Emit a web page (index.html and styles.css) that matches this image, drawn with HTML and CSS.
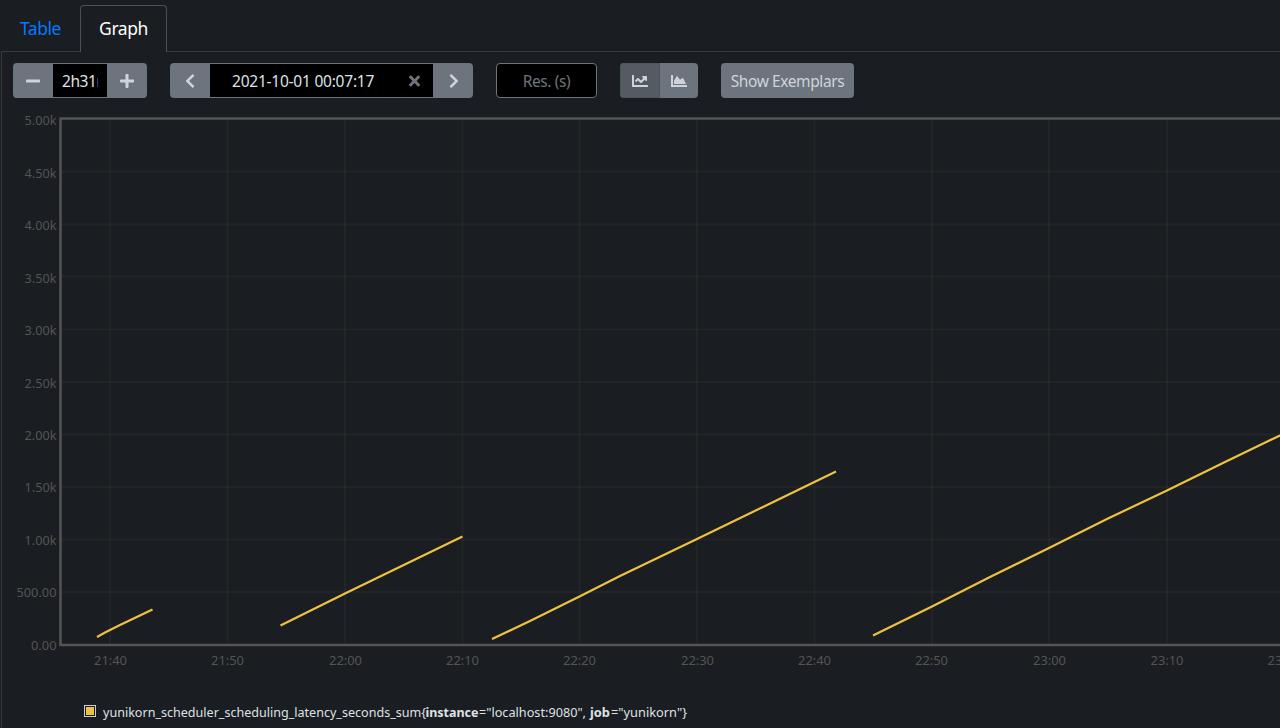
FILE: index.html
```
<!DOCTYPE html>
<html lang="en">
<head>
<meta charset="utf-8">
<title>Graph</title>
<link rel="stylesheet" href="styles.css">
</head>
<body>
<nav class="tabs">
  <a class="tab">Table</a>
  <a class="tab active">Graph</a>
</nav>
<main class="panel">
  <div class="controls">
    <div class="group range">
      <button class="btn"><svg class="icon" viewBox="0 0 448 512"><path d="M416 208H32c-17.67 0-32 14.33-32 32v32c0 17.67 14.33 32 32 32h384c17.67 0 32-14.33 32-32v-32c0-17.67-14.33-32-32-32z"/></svg></button>
      <div class="field duration"><span>2h31m</span></div>
      <button class="btn"><svg class="icon" viewBox="0 0 448 512"><path d="M416 208H272V64c0-17.67-14.33-32-32-32h-32c-17.67 0-32 14.33-32 32v144H32c-17.67 0-32 14.33-32 32v32c0 17.67 14.33 32 32 32h144v144c0 17.67 14.33 32 32 32h32c17.67 0 32-14.33 32-32V304h144c17.67 0 32-14.33 32-32v-32c0-17.67-14.33-32-32-32z"/></svg></button>
    </div>
    <div class="group time">
      <button class="btn prev"><svg class="icon" viewBox="0 0 320 512"><path d="M34.52 239.03L228.87 44.69c9.37-9.37 24.57-9.37 33.94 0l22.67 22.67c9.36 9.36 9.37 24.52.04 33.9L131.49 256l154.02 154.75c9.34 9.38 9.32 24.54-.04 33.9l-22.67 22.67c-9.37 9.37-24.57 9.37-33.94 0L34.52 272.97c-9.37-9.37-9.37-24.57 0-33.94z"/></svg></button>
      <div class="field datetime"><span>2021-10-01 00:07:17</span><svg class="icon clear" viewBox="0 0 352 512"><path d="M242.72 256l100.07-100.07c12.28-12.28 12.28-32.19 0-44.48l-22.24-22.24c-12.28-12.28-32.19-12.28-44.48 0L176 189.28 75.93 89.21c-12.28-12.28-32.19-12.28-44.48 0L9.21 111.45c-12.28 12.28-12.28 32.19 0 44.48L109.28 256 9.21 356.07c-12.28 12.28-12.28 32.19 0 44.48l22.24 22.24c12.28 12.28 32.2 12.28 44.48 0L176 322.72l100.07 100.07c12.28 12.28 32.2 12.28 44.48 0l22.24-22.24c12.28-12.28 12.28-32.19 0-44.48L242.72 256z"/></svg></div>
      <button class="btn next"><svg class="icon" viewBox="0 0 320 512"><path d="M285.476 272.971L91.132 467.314c-9.373 9.373-24.569 9.373-33.941 0l-22.667-22.667c-9.357-9.357-9.375-24.522-.04-33.901L188.505 256 34.484 101.255c-9.335-9.379-9.317-24.544.04-33.901l22.667-22.667c9.373-9.373 24.569-9.373 33.941 0L285.475 239.03c9.373 9.372 9.373 24.568.001 33.941z"/></svg></button>
    </div>
    <div class="resolution">Res. (s)</div>
    <div class="group kind">
      <button class="btn pressed"><svg class="icon" viewBox="0 0 512 512"><path d="M496 384H64V80c0-8.84-7.16-16-16-16H16C7.16 64 0 71.16 0 80v336c0 17.67 14.33 32 32 32h464c8.84 0 16-7.16 16-16v-32c0-8.84-7.16-16-16-16zM464 96H345.94c-21.38 0-32.09 25.85-16.97 40.97l32.4 32.4L288 242.75l-73.37-73.37c-12.5-12.5-32.76-12.5-45.25 0l-68.69 68.69c-6.25 6.25-6.25 16.38 0 22.63l22.62 22.62c6.25 6.25 16.38 6.25 22.63 0L192 237.25l73.37 73.37c12.5 12.5 32.76 12.5 45.25 0l96-96 32.4 32.4c15.12 15.12 40.97 4.41 40.97-16.97V112c.01-8.84-7.15-16-15.99-16z"/></svg></button>
      <button class="btn"><svg class="icon" viewBox="0 0 512 512"><path d="M500 384c6.6 0 12 5.4 12 12v40c0 6.600-5.400 12-12 12H12c-6.600 0-12-5.400-12-12V76c0-6.600 5.400-12 12-12h40c6.600 0 12 5.400 12 12v308h436zM372.700 159.500L288 216l-85.300-113.700c-5.100-6.800-15.500-6.300-19.900 1L96 248v104h384l-89.900-187.800c-3.200-6.500-11.400-8.700-17.400-4.700z"/></svg></button>
    </div>
    <button class="btn exemplars">Show Exemplars</button>
  </div>
  <svg class="chart" width="1278" height="570" viewBox="2 107 1278 570">
    <path class="grid" d="M110 120V644M227.500 120V644M345 120V644M462.500 120V644M579.500 120V644M697 120V644M814.500 120V644M932 120V644M1049 120V644M1167 120V644"/>
    <path class="grid" d="M62 171.500H1280M62 224.500H1280M62 276.500H1280M62 329.500H1280M62 382H1280M62 434.500H1280M62 487H1280M62 539.500H1280M62 592H1280"/>
    <path class="frame" d="M1290 118.500H60.500V645H1290"/>
    <g class="series">
      <path d="M97 637L106 632L120 625L152.500 609.500"/>
      <path d="M280.500 625.500L345 593.500L462.500 536.500"/>
      <path d="M492 639L530 621L579.500 596.500L620 576L697 539L836 471.500"/>
      <path d="M873 635.500L932 606.500L990 577L1049 548L1108 518.500L1167 490.500L1225 462L1285 433"/>
    </g>
    <g class="ticks ylab">
      <text x="56.500" y="125" textLength="32" lengthAdjust="spacingAndGlyphs">5.00k</text>
      <text x="56.500" y="178" textLength="32" lengthAdjust="spacingAndGlyphs">4.50k</text>
      <text x="56.500" y="230" textLength="32" lengthAdjust="spacingAndGlyphs">4.00k</text>
      <text x="56.500" y="283" textLength="32" lengthAdjust="spacingAndGlyphs">3.50k</text>
      <text x="56.500" y="335" textLength="32" lengthAdjust="spacingAndGlyphs">3.00k</text>
      <text x="56.500" y="388" textLength="32" lengthAdjust="spacingAndGlyphs">2.50k</text>
      <text x="56.500" y="440" textLength="32" lengthAdjust="spacingAndGlyphs">2.00k</text>
      <text x="56.500" y="492" textLength="32" lengthAdjust="spacingAndGlyphs">1.50k</text>
      <text x="56.500" y="545" textLength="32" lengthAdjust="spacingAndGlyphs">1.00k</text>
      <text x="56.500" y="597" textLength="40" lengthAdjust="spacingAndGlyphs">500.00</text>
      <text x="56.500" y="650" textLength="25.500" lengthAdjust="spacingAndGlyphs">0.00</text>
    </g>
    <g class="ticks xlab">
      <text x="110.500" y="665" textLength="33" lengthAdjust="spacingAndGlyphs">21:40</text>
      <text x="227.500" y="665" textLength="33" lengthAdjust="spacingAndGlyphs">21:50</text>
      <text x="345.500" y="665" textLength="33" lengthAdjust="spacingAndGlyphs">22:00</text>
      <text x="462.500" y="665" textLength="33" lengthAdjust="spacingAndGlyphs">22:10</text>
      <text x="579.500" y="665" textLength="33" lengthAdjust="spacingAndGlyphs">22:20</text>
      <text x="697.500" y="665" textLength="33" lengthAdjust="spacingAndGlyphs">22:30</text>
      <text x="814.500" y="665" textLength="33" lengthAdjust="spacingAndGlyphs">22:40</text>
      <text x="931.500" y="665" textLength="33" lengthAdjust="spacingAndGlyphs">22:50</text>
      <text x="1049.500" y="665" textLength="33" lengthAdjust="spacingAndGlyphs">23:00</text>
      <text x="1167" y="665" textLength="33" lengthAdjust="spacingAndGlyphs">23:10</text>
      <text x="1284" y="665" textLength="33" lengthAdjust="spacingAndGlyphs">23:20</text>
    </g>
  </svg>
  <div class="legend">
    <span class="swatch"></span>
    <svg class="legend-text" width="600" height="24">
      <text x="0" y="17" textLength="323" lengthAdjust="spacingAndGlyphs">yunikorn_scheduler_scheduling_latency_seconds_sum{</text>
      <text class="key" x="322.500" y="17" textLength="53" lengthAdjust="spacingAndGlyphs">instance</text>
      <text x="376" y="17" textLength="107" lengthAdjust="spacingAndGlyphs">="localhost:9080",</text>
      <text class="key" x="487" y="17" textLength="20" lengthAdjust="spacingAndGlyphs">job</text>
      <text x="508" y="17" textLength="76" lengthAdjust="spacingAndGlyphs">="yunikorn"}</text>
    </svg>
  </div>
</main>
</body>
</html>
```
FILE: styles.css
```
* { box-sizing: border-box; }
body {
  margin: 0;
  width: 1280px;
  height: 728px;
  overflow: hidden;
  background: #1a1d21;
  color: #dee2e6;
  font-family: "Noto Sans", "Open Sans", sans-serif;
}
.tabs { display: flex; height: 51px; padding: 5px 0 0 1px; }
.tab {
  width: 79px;
  height: 47px;
  line-height: 46px;
  text-align: center;
  font-size: 17.5px;
  color: #007bff;
  letter-spacing: -0.45px;
}
.tab.active {
  width: 87px;
  line-height: 45px;
  border: 1px solid #495057;
  border-bottom: 0;
  border-radius: 4px 4px 0 0;
  background: #1a1d21;
  color: #fff;
  position: relative;
}
.panel {
  margin-left: 1px;
  height: 677px;
  border-left: 1px solid #343a40;
  border-top: 1px solid #343a40;
}
.controls { display: flex; height: 55px; padding: 11px 0 0 11px; }
.group { display: flex; height: 35px; border-radius: 4px; overflow: hidden; }
.btn {
  display: flex;
  align-items: center;
  justify-content: center;
  width: 40px;
  height: 35px;
  border: 0;
  padding: 0;
  background: #6c757d;
  color: #ced4da;
  font-family: inherit;
}
.icon { height: 16px; fill: currentColor; }
.prev { padding-right: 1px; }
.next { padding-left: 1px; }
.field {
  display: flex;
  align-items: center;
  background: #000;
  border: solid #6c757d;
  border-width: 1px 0;
  font-size: 15.5px;
  color: #dee2e6;
}
.range { width: 134px; margin-right: 23px; }
.duration { width: 54px; padding: 0 9px; }
.duration span { overflow: hidden; letter-spacing: -0.45px; }
.time { width: 303px; margin-right: 23px; }
.datetime { width: 223px; padding-left: 22px; }
.datetime span { width: 177px; white-space: nowrap; letter-spacing: -0.23px; }
.clear { color: #6c757d; }
.resolution {
  width: 101px;
  height: 35px;
  margin-right: 23px;
  border: 1px solid #6c757d;
  border-radius: 4px;
  background: #000;
  color: #6c757d;
  font-size: 15.5px;
  line-height: 34px;
  text-align: center;
  letter-spacing: -0.4px;
}
.kind { width: 78px; margin-right: 23px; }
.kind .btn { width: 38px; padding-right: 1px; }
.kind .pressed { width: 40px; background: #545b62; border: 1px solid #4e555b; }
.exemplars {
  width: 133px;
  border-radius: 4px;
  font-size: 15.5px;
  color: #ced4da;
  letter-spacing: -0.4px;
}
.chart { display: block; }
.grid { stroke: #545454; stroke-opacity: .14; stroke-width: 2; fill: none; }
.frame { stroke: #545454; stroke-width: 2.5; fill: none; }
.series { stroke: #edc240; stroke-width: 2.2; fill: none; stroke-linejoin: round; }
.ticks { font-size: 13.2px; fill: #545454; }
.ylab { text-anchor: end; }
.xlab { text-anchor: middle; }
.legend { display: flex; align-items: center; height: 24px; margin-top: 23px; padding-left: 82px; }
.swatch {
  width: 12px;
  height: 12px;
  margin-right: 7px;
  margin-top: -2px;
  border: 1px solid #ccc;
  background: #edc240;
  box-shadow: inset 0 0 0 1px #1a1d21;
}
.legend-text { font-size: 12.7px; fill: #dee2e6; }
.key { font-weight: 700; }
```
